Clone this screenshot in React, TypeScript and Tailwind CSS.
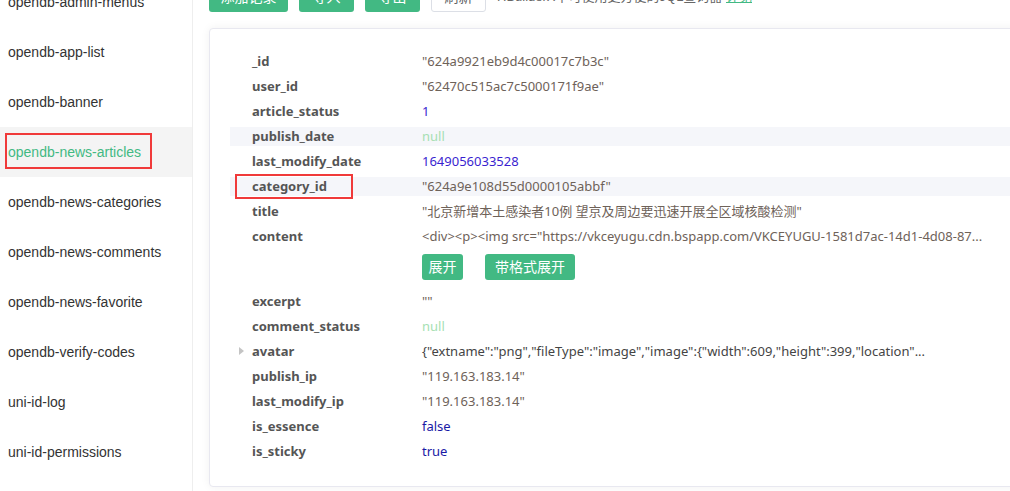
import React from "react";

const font = { fontFamily: '"Liberation Sans", "Noto Sans CJK SC", sans-serif' };
const dataFont = { fontFamily: '"Noto Sans", "Noto Sans CJK SC", sans-serif' };

const collections = [
  "opendb-admin-menus",
  "opendb-app-list",
  "opendb-banner",
  "opendb-news-articles",
  "opendb-news-categories",
  "opendb-news-comments",
  "opendb-news-favorite",
  "opendb-verify-codes",
  "uni-id-log",
  "uni-id-permissions",
];

type Kind = "str" | "num" | "nul" | "bool" | "obj";

type Field = {
  key: string;
  value: string;
  kind: Kind;
  band?: boolean;
  marked?: boolean;
  expand?: boolean;
  actions?: boolean;
};

const fields: Field[] = [
  { key: "_id", value: '"624a9921eb9d4c00017c7b3c"', kind: "str" },
  { key: "user_id", value: '"62470c515ac7c5000171f9ae"', kind: "str" },
  { key: "article_status", value: "1", kind: "num" },
  { key: "publish_date", value: "null", kind: "nul", band: true },
  { key: "last_modify_date", value: "1649056033528", kind: "num" },
  { key: "category_id", value: '"624a9e108d55d0000105abbf"', kind: "str", band: true, marked: true },
  { key: "title", value: '"北京新增本土感染者10例 望京及周边要迅速开展全区域核酸检测"', kind: "str" },
  {
    key: "content",
    value: '<div><p><img src="https://vkceyugu.cdn.bspapp.com/VKCEYUGU-1581d7ac-14d1-4d08-87...',
    kind: "str",
    actions: true,
  },
  { key: "excerpt", value: '""', kind: "str" },
  { key: "comment_status", value: "null", kind: "nul" },
  {
    key: "avatar",
    value: '{"extname":"png","fileType":"image","image":{"width":609,"height":399,"location"...',
    kind: "obj",
    expand: true,
  },
  { key: "publish_ip", value: '"119.163.183.14"', kind: "str" },
  { key: "last_modify_ip", value: '"119.163.183.14"', kind: "str" },
  { key: "is_essence", value: "false", kind: "bool" },
  { key: "is_sticky", value: "true", kind: "bool" },
];

const valueColor: Record<Kind, string> = {
  str: "text-[#6e6259]",
  num: "text-[#3a1fd0]",
  nul: "text-[#a6dfb3]",
  bool: "text-[#1a1aa6]",
  obj: "text-[#444]",
};

const Sidebar = () => (
  <div className="w-[193px] shrink-0 border-r border-[#eeeeee] bg-white">
    <div className="-mt-[23px]">
      {collections.map((name) => {
        const active = name === "opendb-news-articles";
        return (
          <div
            key={name}
            className={`relative flex h-[50px] items-center pl-2 text-[14px] ${
              active ? "bg-[#f4f4f4] text-[#42b983]" : "text-[#333]"
            }`}
          >
            {name}
            {active && (
              <div className="absolute left-[5px] top-[6px] h-[36px] w-[147px] border-2 border-[#f03a3a]" />
            )}
          </div>
        );
      })}
    </div>
  </div>
);

const Toolbar = () => (
  <div className="-mt-[18px] flex h-[30px] items-center gap-[11px]">
    <button className="h-[30px] w-[79px] rounded-[3px] bg-[#42b983] text-[14px] text-white">添加记录</button>
    <button className="h-[30px] w-[55px] rounded-[3px] bg-[#42b983] text-[14px] text-white">导入</button>
    <button className="h-[30px] w-[55px] rounded-[3px] bg-[#42b983] text-[14px] text-white">导出</button>
    <button className="h-[30px] w-[55px] rounded-[3px] border border-[#dcdfe6] bg-white text-[14px] text-[#606266]">
      刷新
    </button>
    <span className="whitespace-nowrap text-[13px] text-[#666]">
      HBuilderX中可使用更方便的JQL查询器 <span className="text-[#42b983] underline">详见</span>
    </span>
  </div>
);

const Row = ({ f }: { f: Field }) => (
  <>
    <div
      className={`relative flex h-[19px] items-center whitespace-nowrap text-[13px] ${
        f.band ? "bg-[#f5f6fa]" : ""
      }`}
      style={dataFont}
    >
      {f.expand && (
        <span className="absolute left-[9px] top-[5px] h-0 w-0 border-y-[4px] border-l-[5px] border-y-transparent border-l-[#c4c4c4]" />
      )}
      <div className="w-[192px] shrink-0 pl-[22px] font-bold text-[#555]">{f.key}</div>
      <div className={`${valueColor[f.kind]}`}>{f.value}</div>
      {f.marked && (
        <div className="absolute -top-[3px] left-[5px] h-[25px] w-[118px] border-2 border-[#f03a3a]" />
      )}
    </div>
    {f.actions && (
      <div className="flex h-[34px] gap-[22px] pl-[192px] pt-[2px]">
        <button className="h-[26px] w-[41px] rounded-[3px] bg-[#42b983] text-[14px] text-white">展开</button>
        <button className="h-[26px] w-[90px] rounded-[3px] bg-[#42b983] text-[14px] text-white">带格式展开</button>
      </div>
    )}
  </>
);

const App: React.FC = () => {
  return (
    <div className="flex h-[491px] w-[1010px] overflow-hidden bg-white" style={font}>
      <Sidebar />
      <div className="flex min-w-0 flex-1 flex-col pl-[16px]">
        <Toolbar />
        <div className="mt-[16px] -mr-[30px] rounded-[4px] border border-[#e8e8f0] bg-white pb-[25px] pl-[20px] pt-[23px] shadow-[0_0_10px_rgba(0,0,0,0.06)]">
          <div className="flex flex-col gap-[6px]">
            {fields.map((f) => (
              <Row key={f.key} f={f} />
            ))}
          </div>
        </div>
      </div>
    </div>
  );
};

export default App;
